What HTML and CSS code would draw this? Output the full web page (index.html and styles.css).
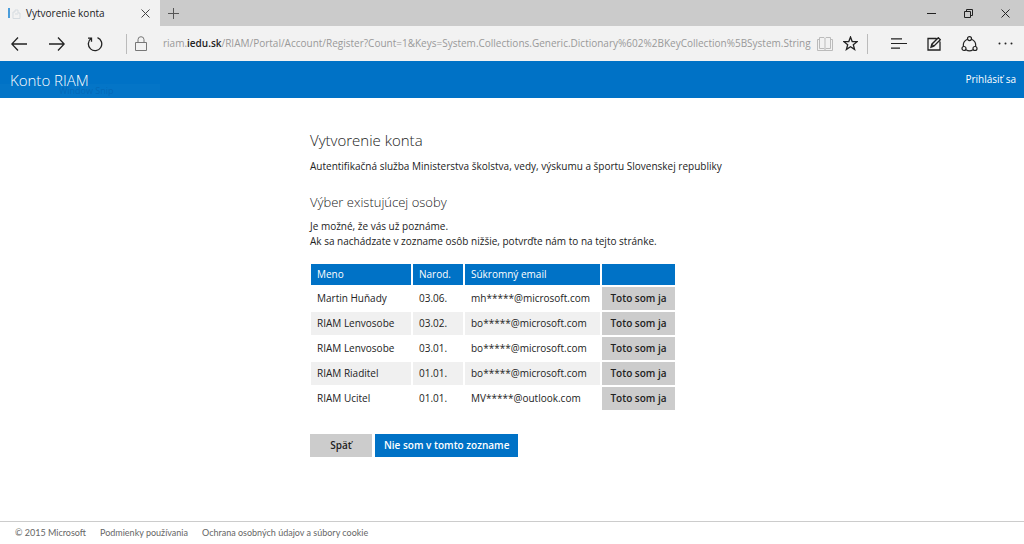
FILE: index.html
```html
<!DOCTYPE html>
<html lang="sk">
<head>
<meta charset="utf-8">
<title>Vytvorenie konta</title>
<link rel="stylesheet" href="styles.css">
</head>
<body>
<div class="window">
  <div class="tabstrip">
    <div class="tab">
      <svg class="favicon" width="13" height="12" viewBox="0 0 13 12" fill="none"><path d="M1 1v10" stroke="#4a9ddb" stroke-width="2"/><path d="M5 11.500V5h2V3h3v3h2v5.500zM7 7h3" stroke="#d5dbe0"/></svg>
      <span class="tab-title">Vytvorenie konta</span>
      <button class="icon-button tab-close" aria-label="Zavrieť kartu"><svg width="9" height="9" viewBox="0 0 9 9" fill="none" stroke="#444"><path d="M.5.5l8 8M8.500.5l-8 8"/></svg></button>
    </div>
    <button class="icon-button new-tab" aria-label="Nová karta"><svg width="11" height="11" viewBox="0 0 11 11" fill="none" stroke="#555"><path d="M5.500 0v11M0 5.500h11"/></svg></button>
    <div class="window-controls">
      <button class="icon-button" aria-label="Minimalizovať"><svg width="9" height="9" viewBox="0 0 9 9" fill="none" stroke="#222"><path d="M0 4.500h9"/></svg></button>
      <button class="icon-button" aria-label="Obnoviť"><svg width="9" height="9" viewBox="0 0 9 9" fill="none" stroke="#222"><path d="M.5 2.500h6v6h-6zM2.500 2.500v-2h6v6h-2"/></svg></button>
      <button class="icon-button" aria-label="Zavrieť"><svg width="9" height="9" viewBox="0 0 9 9" fill="none" stroke="#222"><path d="M.5.5l8 8M8.500.5l-8 8"/></svg></button>
    </div>
  </div>
  <div class="toolbar">
    <div class="nav-buttons">
      <button class="icon-button" aria-label="Späť"><svg width="16" height="14" viewBox="0 0 16 14" fill="none" stroke="#222" stroke-width="1.300"><path d="M16 7H1M7 .5L.8 7 7 13.500"/></svg></button>
      <button class="icon-button" aria-label="Dopredu"><svg width="16" height="14" viewBox="0 0 16 14" fill="none" stroke="#222" stroke-width="1.300"><path d="M0 7h15M9 .5L15.200 7 9 13.500"/></svg></button>
      <button class="icon-button" aria-label="Obnoviť stránku"><svg width="16" height="16" viewBox="0 0 16 16" fill="none" stroke="#222" stroke-width="1.300"><path d="M10.500 1.700A6.700 6.700 0 1 1 4 2.600M1 2.100h3.500v3.700"/></svg></button>
    </div>
    <div class="address">
      <svg class="lock" width="12" height="15" viewBox="0 0 12 15" fill="none" stroke="#777"><path d="M.5 6.500h11v8H.5zM3 6.500V3.700a3 3 0 0 1 6 0v2.800"/></svg>
      <div class="url" role="textbox" contenteditable="true" spellcheck="false" aria-label="Adresa">riam.<b>iedu.sk</b>/RIAM/Portal/Account/Register?Count=1&amp;Keys=System.Collections.Generic.Dictionary%602%2BKeyCollection%5BSystem.String</div>
      <button class="icon-button" aria-label="Zobrazenie na čítanie"><svg width="16" height="14" viewBox="0 0 16 14" fill="none" stroke="#bbb"><path d="M2.500.5H7l1 1 1-1h4.500v11H9l-1 1-1-1H2.500zM8 1.500v11M2.500 2.500h-2v11h15v-11h-2"/></svg></button>
      <button class="icon-button star" aria-label="Pridať k obľúbeným"><svg width="15" height="15" viewBox="0 0 15 15" fill="none" stroke="#222" stroke-width="1.300"><path d="M7.500 1l1.700 4.500 4.900.2-3.800 3 1.300 4.700-4.100-2.700-4.100 2.700 1.300-4.700-3.800-3 4.900-.2z"/></svg></button>
    </div>
    <div class="tools">
      <button class="icon-button" aria-label="Centrum"><svg width="17" height="11" viewBox="0 0 17 11" fill="none" stroke="#222"><path d="M1 .9h11M1 5.500h16M1 10.100h9" stroke-width="1.200"/></svg></button>
      <button class="icon-button" aria-label="Webová poznámka"><svg width="14" height="14" viewBox="0 0 14 14" fill="none" stroke="#222" stroke-width="1.300"><path d="M9.500 1.500H1V13h12V4.500M4 10.200l.8-3L11.300.7l2 2L6.800 9.200zM4.800 7.200l2 2"/></svg></button>
      <button class="icon-button" aria-label="Zdieľať"><svg width="17" height="16" viewBox="0 0 17 16" fill="none" stroke="#222" stroke-width="1.200"><circle cx="8.500" cy="2.600" r="2"/><circle cx="3" cy="12.500" r="2"/><circle cx="14" cy="12.500" r="2"/><path d="M6.500 3.200A6.200 6.200 0 0 0 2.500 10.500M10.500 3.200a6.200 6.200 0 0 1 4 7.300M5 13.800a6.500 6.500 0 0 0 7 0"/></svg></button>
      <button class="icon-button" aria-label="Ďalšie akcie"><svg width="15" height="3" viewBox="0 0 15 3" fill="#222"><circle cx="1.500" cy="1.500" r="1"/><circle cx="7.500" cy="1.500" r="1"/><circle cx="13.500" cy="1.500" r="1"/></svg></button>
    </div>
  </div>
  <header class="site-header">
    <span class="snip" aria-hidden="true">Window Snip</span>
    <a class="brand" href="#">Konto RIAM</a>
    <a class="sign-in" href="#">Prihlásiť sa</a>
  </header>
  <main class="content">
    <h1>Vytvorenie konta</h1>
    <p>Autentifikačná služba Ministerstva školstva, vedy, výskumu a športu Slovenskej republiky</p>
    <h2>Výber existujúcej osoby</h2>
    <p>Je možné, že vás už poznáme.<br>Ak sa nachádzate v zozname osôb nižšie, potvrďte nám to na tejto stránke.</p>
    <table class="people">
      <thead><tr><th class="name">Meno</th><th class="born">Narod.</th><th class="email">Súkromný email</th><th class="action"></th></tr></thead>
      <tbody>
        <tr><td>Martin Huňady</td><td>03.06.</td><td>mh*****@microsoft.com</td><td class="action"><button class="button">Toto som ja</button></td></tr>
        <tr><td>RIAM Lenvosobe</td><td>03.02.</td><td>bo*****@microsoft.com</td><td class="action"><button class="button">Toto som ja</button></td></tr>
        <tr><td>RIAM Lenvosobe</td><td>03.01.</td><td>bo*****@microsoft.com</td><td class="action"><button class="button">Toto som ja</button></td></tr>
        <tr><td>RIAM Riaditel</td><td>01.01.</td><td>bo*****@microsoft.com</td><td class="action"><button class="button">Toto som ja</button></td></tr>
        <tr><td>RIAM Ucitel</td><td>01.01.</td><td>MV*****@outlook.com</td><td class="action"><button class="button">Toto som ja</button></td></tr>
      </tbody>
    </table>
    <div class="actions">
      <button class="button">Späť</button>
      <button class="button primary">Nie som v tomto zozname</button>
    </div>
  </main>
  <footer class="site-footer">
    <span>© 2015 Microsoft</span>
    <a href="#">Podmienky používania</a>
    <a href="#">Ochrana osobných údajov a súbory cookie</a>
  </footer>
</div>
</body>
</html>
```
FILE: styles.css
```css
* { box-sizing: border-box; }
body {
  margin: 0;
  background: #fff;
  color: #222;
  font: 10px/15px "Open Sans", "Noto Sans", sans-serif;
}
a { color: inherit; text-decoration: none; }
button { font: inherit; border: 0; cursor: pointer; }
.window { display: flex; flex-direction: column; min-height: 100vh; }

.icon-button {
  display: flex;
  align-items: center;
  justify-content: center;
  padding: 0;
  background: none;
}
.tabstrip { display: flex; height: 26px; background: #cbcbcb; }
.tab {
  display: flex;
  align-items: center;
  width: 160px;
  padding: 0 10px 0 8px;
  background: #f2f2f2;
}
.tab-title { flex: 1; margin-left: 5px; }
.new-tab { width: 27px; }
.window-controls { display: flex; gap: 28px; margin-left: auto; padding-right: 14px; }

.toolbar { display: flex; align-items: center; height: 35px; padding: 0 11px; background: #f2f2f2; }
.nav-buttons { display: flex; gap: 22px; padding-right: 23px; }
.address {
  display: flex;
  flex: 1;
  align-items: center;
  min-width: 0;
  height: 20px;
  padding: 0 9px 0 8px;
  border: solid #bbb;
  border-width: 0 1px;
}
.lock { margin-right: 16px; }
.star { margin-left: 10px; }
.url { flex: 1; min-width: 0; overflow: hidden; white-space: nowrap; color: #999; outline: 0; }
.url b { color: #222; font-weight: 600; }
.tools { display: flex; align-items: center; gap: 20px; padding-left: 22px; }

.site-header {
  position: relative;
  display: flex;
  align-items: center;
  justify-content: space-between;
  height: 37px;
  padding: 0 8px 0 10px;
  background: #0072c6;
  color: #fff;
}
.brand, .sign-in { z-index: 1; }
.brand { font-size: 15px; font-weight: 300; line-height: 20px; }
.snip {
  position: absolute;
  bottom: 0;
  left: 0;
  width: 160px;
  height: 14px;
  padding-left: 59px;
  background: #0878c9;
  color: #0562ad;
  font-size: 9px;
  line-height: 14px;
  opacity: .6;
}

.content { flex: 1; width: 100%; padding: 32px 16px 32px 310px; }
h1, h2, p { margin: 0; }
h1 { margin-bottom: 9px; font-size: 15px; font-weight: 300; line-height: 20px; }
h2 { margin: 18px 0 7px; font-size: 13px; font-weight: 300; line-height: 20px; }
.people { margin: 13px 0 22px -1px; border-spacing: 2px; }
.people th, .people td { height: 23px; padding: 0 6px; text-align: left; font-weight: 400; }
.people th { height: 21px; background: #0072c6; color: #fff; }
.people .name { width: 100px; }
.people .born { width: 50px; }
.people .email { width: 135px; }
.people tbody tr:nth-child(even) td { background: #f0f0f0; }
.people td.action { padding: 0; }
.button { height: 23px; padding: 0 9px; background: #ccc; color: #222; font-weight: 600; }
.people .button { display: block; width: 73px; padding: 0; }
.actions { display: flex; gap: 3px; }
.actions .button { min-width: 62px; }
.actions .primary { background: #0072c6; color: #fff; }

.site-footer {
  display: flex;
  gap: 14px;
  padding: 4px 15px;
  border-top: 1px solid #ccc;
  color: #666;
  font-family: Lato, "Open Sans", sans-serif;
  font-size: 9px;
  line-height: 14px;
}
```
